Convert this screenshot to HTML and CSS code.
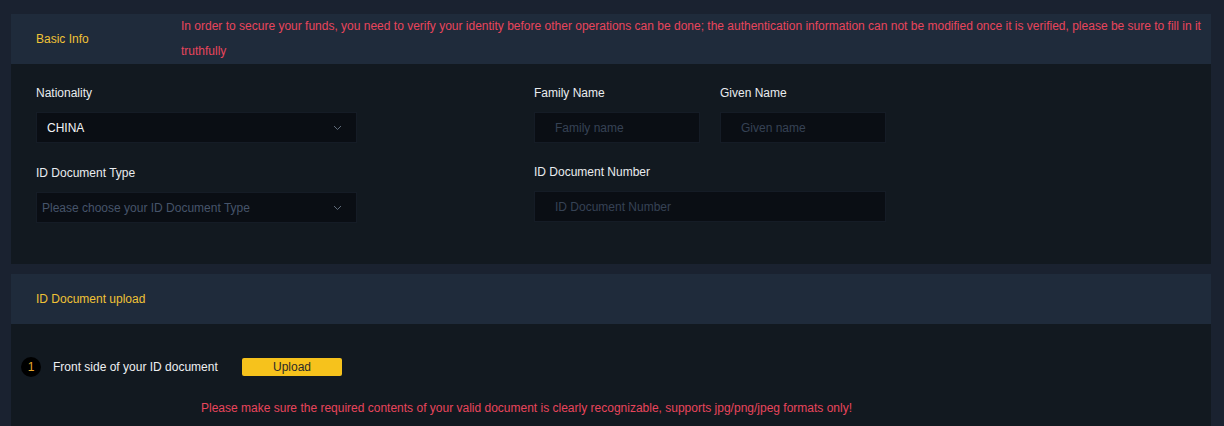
FILE: index.html
```html
<!DOCTYPE html>
<html>
  <head>
    <title>Identity Verification</title>
    <link rel="stylesheet" href="styles.css">
  </head>
  <body>
    <div class="card">
      <div class="card-header">
        <div class="card-title">Basic Info</div>
        <div class="notice">In order to secure your funds, you need to verify your identity before other operations can be done; the authentication information can not be modified once it is verified, please be sure to fill in it truthfully</div>
      </div>
      <div class="card-body form-grid">
        <div class="field">
          <label>Nationality</label>
          <div class="select select-value">
            <span>CHINA</span>
            <svg class="chevron" width="9" height="6" viewBox="0 0 9 6"><path d="M1 1l3.5 3.5L8 1" fill="none" stroke="#5f6b7a" stroke-width="1"/></svg>
          </div>
        </div>
        <div class="field-pair">
          <div class="field">
            <label>Family Name</label>
            <input class="input short" type="text" placeholder="Family name">
          </div>
          <div class="field">
            <label>Given Name</label>
            <input class="input short" type="text" placeholder="Given name">
          </div>
        </div>
        <div class="field">
          <label>ID Document Type</label>
          <div class="select">
            <span class="placeholder">Please choose your ID Document Type</span>
            <svg class="chevron" width="9" height="6" viewBox="0 0 9 6"><path d="M1 1l3.5 3.5L8 1" fill="none" stroke="#5f6b7a" stroke-width="1"/></svg>
          </div>
        </div>
        <div class="field field-up">
          <label>ID Document Number</label>
          <input class="input wide" type="text" placeholder="ID Document Number">
        </div>
      </div>
    </div>

    <div class="card">
      <div class="card-header">
        <div class="card-title">ID Document upload</div>
      </div>
      <div class="card-body upload-body">
        <div class="upload-row">
          <span class="step">1</span>
          <span class="upload-label">Front side of your ID document</span>
          <button class="upload-btn">Upload</button>
        </div>
        <p class="upload-note">Please make sure the required contents of your valid document is clearly recognizable, supports jpg/png/jpeg formats only!</p>
      </div>
    </div>
  </body>
</html>
```

FILE: styles.css
```css
body {
  margin: 0;
  padding: 14px 13px 0 11px;
  background-color: #1a2230;
  font-family: "Liberation Sans", Arial, sans-serif;
  font-size: 12px;
  color: #e4e7eb;
  height: 426px;
  box-sizing: border-box;
  overflow: hidden;
}
.card {
  width: 1200px;
  margin-bottom: 10px;
}
.card-header {
  display: flex;
  min-height: 50px;
  background-color: #1f2b3b;
  padding-left: 25px;
  box-sizing: border-box;
}
.card-title {
  width: 145px;
  flex-shrink: 0;
  line-height: 50px;
  color: #f0c236;
}
.notice {
  width: 1024px;
  line-height: 25px;
  color: #e8455c;
}
.card-body {
  background-color: #121920;
  padding: 21px 25px 41px;
}
.form-grid {
  display: grid;
  grid-template-columns: 498px 1fr;
  row-gap: 22px;
}
.field-pair {
  display: flex;
  gap: 20px;
}
.field {
  display: flex;
  flex-direction: column;
}
.field-up {
  margin-top: -1px;
}
.field label {
  line-height: 16px;
  margin-bottom: 11px;
  color: #e9ecef;
}
.select {
  width: 321px;
  height: 31px;
  background-color: #0a0e14;
  border: 1px solid #151c26;
  box-sizing: border-box;
  display: flex;
  align-items: center;
  justify-content: space-between;
  padding: 0 14px 0 5px;
}
.select-value span {
  padding-left: 5px;
  color: #f2f4f6;
}
.placeholder {
  color: #46546a;
}
.input {
  height: 31px;
  background-color: #0a0e14;
  border: 1px solid #151c26;
  box-sizing: border-box;
  padding: 0 20px;
  font-family: inherit;
  font-size: 12px;
  color: #e4e7eb;
  outline: none;
}
.input::placeholder {
  color: #364254;
}
.short {
  width: 166px;
}
.wide {
  width: 352px;
}
.upload-body {
  padding: 33px 10px 10px;
}
.upload-row {
  display: flex;
  align-items: center;
  height: 20px;
}
.step {
  width: 20px;
  height: 20px;
  border-radius: 50%;
  background-color: #000;
  color: #e8a92c;
  text-align: center;
  line-height: 20px;
  margin-right: 12px;
}
.upload-label {
  width: 189px;
  color: #eef0f2;
}
.upload-btn {
  width: 100px;
  height: 18px;
  border: none;
  border-radius: 2px;
  background-color: #f6c21c;
  color: #2a2a2a;
  font-family: inherit;
  font-size: 12px;
  padding: 0;
}
.upload-note {
  margin: 23px 0 0 180px;
  line-height: 16px;
  color: #e8455c;
}
```
